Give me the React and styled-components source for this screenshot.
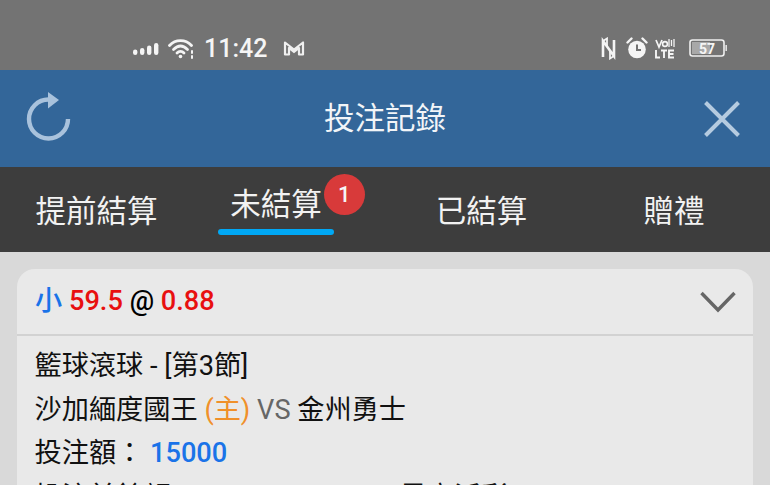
import React from 'react';
import styled, { createGlobalStyle } from 'styled-components';

const Global = createGlobalStyle`
  html, body { margin: 0; padding: 0; background: #d9d9d9; }
  body { width: 770px; height: 485px; overflow: hidden; font-family: Roboto, "Noto Sans CJK TC", sans-serif; }
`;
const Page = styled.div`width: 770px; height: 485px; overflow: hidden; display: flex; flex-direction: column;`;
const StatusBar = styled.div`
  height: 70px; flex: none; background: #737373; color: #f5f5f5; display: flex; align-items: center;
  justify-content: space-between; padding: 26px 43px 0 133px; box-sizing: border-box;
`;
const StatusGroup = styled.div`display: flex; align-items: center;`;
const StatusIcon = styled.svg`flex: none; margin-left: ${p => p.$gap || 0}px;`;
const Clock = styled.span`font-size: 25px; font-weight: 500; line-height: 1; margin: 1px 0 0 9px; width: 79px;`;
const Header = styled.div`
  height: 97px; flex: none; background: #336699; display: grid; grid-template-columns: 1fr auto 1fr; align-items: center;
  padding: 0 30px 0 25px;
`;
const HeaderSide = styled.div`display: flex; justify-content: ${p => p.$end ? 'flex-end' : 'flex-start'};`;
const Title = styled.div`color: #f2f5f8; font-size: 30.5px; line-height: 1; margin: 2px 0 0 5px;`;
const Tabs = styled.div`height: 85px; flex: none; background: #3d3d3d; display: grid; grid-template-columns: 193px 166px 245px 140px;`;
const Tab = styled.div`display: flex; justify-content: center; align-items: flex-start; padding-top: 26px;`;
const TabInner = styled.div`
  position: relative; color: #f2f2f2; font-size: 30.5px; line-height: 38px; white-space: nowrap;
  ${p => p.$active && 'margin-top: -7px;'}
`;
const Underline = styled.div`height: 6px; border-radius: 3px; background: #00a8f5; margin: 5px -12px 0;`;
const Badge = styled.span`
  position: absolute; right: -43px; top: -12px; width: 41px; height: 41px; border-radius: 50%;
  background: #d83a3a; color: #f5f5f5; font-size: 22px; font-weight: 500; display: flex; align-items: center; justify-content: center;
`;
const Content = styled.div`flex: 1; padding: 17px 17px 0;`;
const Card = styled.div`background: #e9e9e9; border-radius: 18px 18px 0 0; height: 240px; overflow: hidden;`;
const CardHead = styled.div`
  height: 65px; border-bottom: 2px solid #d2d2d2; display: flex; align-items: center;
  justify-content: space-between; padding: 0 17px 0 18px;
`;
const Bet = styled.div`font-size: 27.2px; font-weight: 500; line-height: 1; color: #000;`;
const Colored = styled.span`color: ${p => p.$c}; font-weight: ${p => p.$w || 'inherit'};`;
const CardBody = styled.div`padding: 9px 17.5px 0; font-size: 27.2px; line-height: 43.5px; color: #111; white-space: nowrap;`;
const Row = styled.div`display: flex;`;
const Cell = styled.span`width: 365px;`;

export default function App() {
  return (
    <Page>
      <Global />
      <StatusBar>
        <StatusGroup>
          <StatusIcon width="26" height="14" viewBox="0 0 26 14" fill="#f5f5f5">
            <rect x="0" y="8.5" width="4.4" height="5.5" rx="2.2" /><rect x="7" y="7" width="4.4" height="7" rx="2.2" />
            <rect x="14" y="4.5" width="4.4" height="9.5" rx="2.2" /><rect x="21" y="2" width="4.4" height="12" rx="2.2" />
          </StatusIcon>
          <StatusIcon $gap={9} width="27" height="21" viewBox="0 0 27 21" fill="none" stroke="#f5f5f5" strokeWidth="2.8" strokeLinecap="round">
            <path d="M1.5 7.5C7.5 1 17.5 1 23.5 7.5" /><path d="M5.5 11.5C10 7 15 7 19.5 11.5" /><path d="M9 15C11 13 14 13 16 15" />
            <circle cx="12.5" cy="18.5" r="1.8" fill="#f5f5f5" stroke="none" />
            <path d="M24 13v2M24 18v2" strokeWidth="2" />
          </StatusIcon>
          <Clock>11:42</Clock>
          <StatusIcon width="22" height="16" viewBox="0 0 22 16" fill="none" stroke="#f0f0f0" strokeWidth="2.2" strokeLinejoin="round">
            <path d="M2 14.5V2.5L11 9.5L20 2.5V14.5H16V8L11 12L6 8V14.5Z" />
          </StatusIcon>
        </StatusGroup>
        <StatusGroup>
          <StatusIcon width="15" height="23" viewBox="0 0 15 23" fill="none" stroke="#f5f5f5" strokeWidth="2.6">
            <path d="M2 20V4L13 19V3" /><path d="M2 4L6 1.5V9" strokeWidth="1.8"/><path d="M13 19L9 21.5V14" strokeWidth="1.8"/>
          </StatusIcon>
          <StatusIcon $gap={10} width="22" height="22" viewBox="0 0 22 22">
            <circle cx="11" cy="12.5" r="8.8" fill="#f5f5f5" />
            <path d="M1.5 5.5L5.5 1.5M20.5 5.5L16.5 1.5" stroke="#f5f5f5" strokeWidth="2.4" strokeLinecap="round" />
            <path d="M11 7.5V13H15" stroke="#737373" strokeWidth="2" fill="none" />
          </StatusIcon>
          <StatusIcon $gap={7} width="20" height="21" viewBox="0 0 20 21" fill="none" stroke="#f5f5f5">
            <path d="M1 2L4 9L7 2" strokeWidth="1.7" /><circle cx="10" cy="6" r="2.4" strokeWidth="1.6" />
            <path d="M14 1V9M16.5 2V8M19 1V9" strokeWidth="1.3" />
            <path d="M1 12V19.5H5M6 12.5H12M9 12.5V20M19 12.5H14V19.5H19M14 16H18.5" strokeWidth="1.9" />
          </StatusIcon>
          <StatusIcon $gap={14} width="38" height="18" viewBox="0 0 38 18">
            <rect x="1" y="1" width="34" height="16" rx="2.5" fill="none" stroke="#f0f0f0" strokeWidth="1.6" />
            <rect x="3" y="3" width="18" height="12" fill="#a8a8a8" />
            <text x="18" y="14.5" fontSize="14" fontWeight="700" textAnchor="middle" fill="#f5f5f5" fontFamily="Roboto">57</text>
            <rect x="36.4" y="6" width="1.6" height="6" fill="#e0e0e0" />
          </StatusIcon>
        </StatusGroup>
      </StatusBar>
      <Header>
        <HeaderSide>
          <svg width="46" height="54" viewBox="0 0 46 54" fill="none">
            <path d="M43 27A19.5 19.5 0 1 1 23.5 7.5" stroke="#a9c2dc" strokeWidth="4.4" />
            <path d="M23 0L34 8L23 16.5Z" fill="#a9c2dc" />
          </svg>
        </HeaderSide>
        <Title>投注記錄</Title>
        <HeaderSide $end>
          <svg width="36" height="36" viewBox="0 0 36 36" stroke="#b5cbe0" strokeWidth="4">
            <path d="M1.5 1.5L34.5 34.5M34.5 1.5L1.5 34.5" />
          </svg>
        </HeaderSide>
      </Header>
      <Tabs>
        <Tab><TabInner>提前結算</TabInner></Tab>
        <Tab><TabInner $active>未結算<Underline /><Badge>1</Badge></TabInner></Tab>
        <Tab><TabInner>已結算</TabInner></Tab>
        <Tab><TabInner>贈禮</TabInner></Tab>
      </Tabs>
      <Content>
        <Card>
          <CardHead>
            <Bet><Colored $c="#1a73e8">小</Colored> <Colored $c="#e81010">59.5</Colored> @ <Colored $c="#e81010">0.88</Colored></Bet>
            <svg width="36" height="22" viewBox="0 0 36 22" fill="none" stroke="#666" strokeWidth="3.4"><path d="M1.5 2L18 19L34.5 2" /></svg>
          </CardHead>
          <CardBody>
            <div>籃球滾球 - [第3節]</div>
            <div>沙加緬度國王 <Colored $c="#f0902a">(主)</Colored> <Colored $c="#666">VS</Colored> 金州勇士</div>
            <div>投注額： <Colored $c="#1a73e8" $w={500}>15000</Colored></div>
            <Row><Cell>投注前餘額</Cell><span>最高派彩</span></Row>
          </CardBody>
        </Card>
      </Content>
    </Page>
  );
}
